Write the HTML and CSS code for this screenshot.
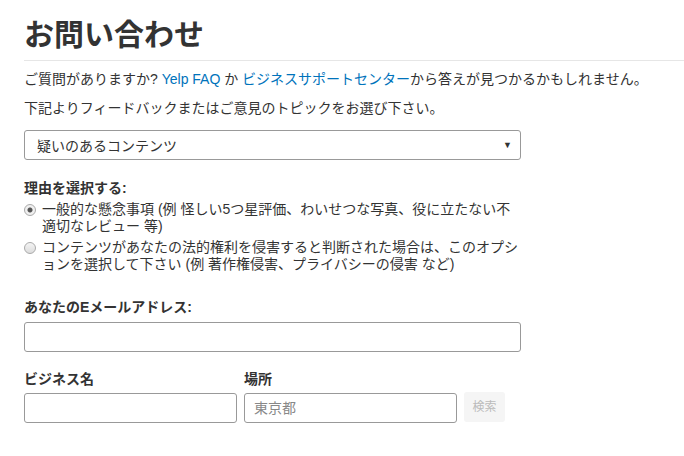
FILE: index.html
```html
<!DOCTYPE html>
<html lang="ja">
<head>
    <meta charset="UTF-8">
    <meta name="viewport" content="width=device-width, initial-scale=1.0">
    <title>お問い合わせ</title>
    <link rel="stylesheet" href="styles.css">
</head>
<body>

    <div class="page">
        <h1 class="page-title">お問い合わせ</h1>

        <p class="intro">ご質問がありますか? <a href="#">Yelp FAQ</a> か <a href="#">ビジネスサポートセンター</a>から答えが見つかるかもしれません。</p>
        <p class="intro">下記よりフィードバックまたはご意見のトピックをお選び下さい。</p>

        <form class="contact-form">
            <div class="select-box">
                <span>疑いのあるコンテンツ</span>
                <span class="caret">▼</span>
            </div>

            <div class="reasons">
                <p class="field-label">理由を選択する:</p>
                <label class="radio-row">
                    <span class="radio checked"></span>
                    <span>一般的な懸念事項 (例 怪しい5つ星評価、わいせつな写真、役に立たない不適切なレビュー 等)</span>
                </label>
                <label class="radio-row">
                    <span class="radio"></span>
                    <span>コンテンツがあなたの法的権利を侵害すると判断された場合は、このオプションを選択して下さい (例 著作権侵害、プライバシーの侵害 など)</span>
                </label>
            </div>

            <div class="field">
                <p class="field-label">あなたのEメールアドレス:</p>
                <div class="text-input"></div>
            </div>

            <div class="biz-row">
                <div class="biz-col">
                    <p class="field-label">ビジネス名</p>
                    <div class="text-input"></div>
                </div>
                <div class="biz-col">
                    <p class="field-label">場所</p>
                    <div class="text-input placeholder">東京都</div>
                </div>
                <div class="search-btn">検索</div>
            </div>
        </form>
    </div>

</body>
</html>
```

FILE: styles.css
```css
body {
    font-family: "Liberation Sans", "Noto Sans CJK JP", sans-serif;
    font-size: 14px;
    color: #333;
    background-color: #fff;
    margin: 0;
    padding: 0;
}

.page {
    padding: 17px 0 0 24px;
}

.page-title {
    font-size: 30px;
    font-weight: bold;
    margin: 0;
    padding-bottom: 7px;
    line-height: 36px;
    border-bottom: 1px solid #e6e6e6;
}

.intro {
    margin: 9px 0 0;
    line-height: 19px;
}

.intro + .intro {
    margin-top: 10px;
}

.intro a {
    color: #0073bb;
    text-decoration: none;
}

.contact-form {
    width: 497px;
    margin-top: 12px;
}

.select-box {
    height: 28px;
    border: 1px solid #999;
    border-radius: 3px;
    display: flex;
    justify-content: space-between;
    align-items: center;
    padding: 0 8px 0 12px;
}

.caret {
    font-size: 9px;
}

.field-label {
    font-weight: bold;
    margin: 0 0 4px;
    line-height: 18px;
}

.reasons {
    margin-top: 19px;
}

.radio-row {
    display: flex;
    align-items: flex-start;
    gap: 6px;
    line-height: 17px;
    margin-bottom: 4px;
}

.radio {
    flex: none;
    width: 10px;
    height: 10px;
    margin-top: 3px;
    border: 1px solid #aaa;
    border-radius: 50%;
    background: linear-gradient(#f4f4f4, #dcdcdc);
}

.radio.checked {
    background: radial-gradient(circle, #555 0 2px, #f0f0f0 3px);
}

.field {
    margin-top: 25px;
}

.field .field-label {
    margin-bottom: 6px;
}

.text-input {
    height: 28px;
    border: 1px solid #999;
    border-radius: 3px;
    box-sizing: content-box;
}

.placeholder {
    color: #888;
    padding-left: 9px;
    line-height: 28px;
}

.biz-row {
    display: flex;
    align-items: flex-end;
    gap: 7px;
    margin-top: 18px;
}

.biz-col {
    width: 213px;
}

.biz-col .field-label {
    margin-bottom: 5px;
}

.biz-col .text-input {
    width: 211px;
}

.biz-col .placeholder {
    width: 202px;
}

.search-btn {
    width: 41px;
    height: 30px;
    line-height: 30px;
    text-align: center;
    background-color: #f5f5f5;
    color: #bbb;
    font-size: 12px;
    border-radius: 3px;
    margin-bottom: 1px;
}
```
